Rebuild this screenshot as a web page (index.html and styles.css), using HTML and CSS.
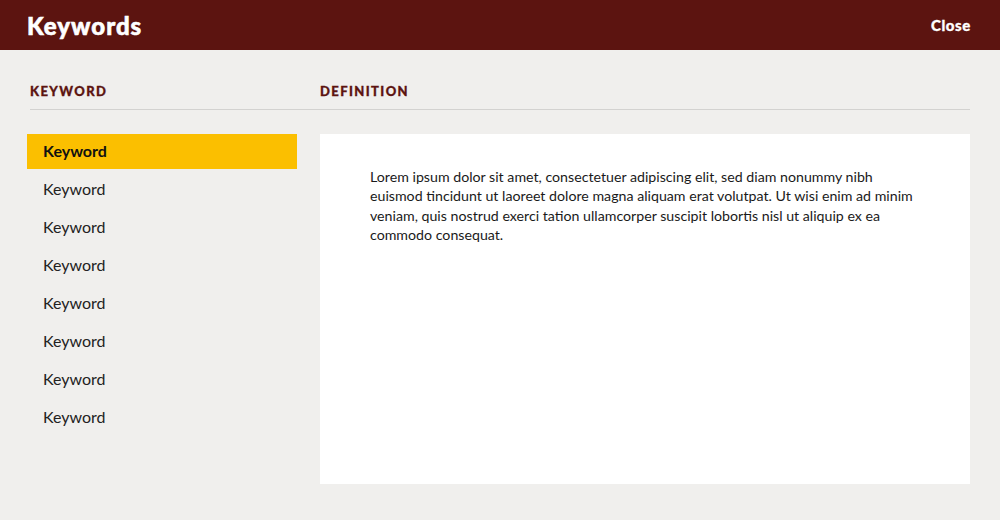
FILE: index.html
```html
<!DOCTYPE html>
<html>
<head>
<meta charset="utf-8">
<link rel="stylesheet" href="styles.css">
</head>
<body>
<header class="topbar">
  <h1 class="title">Keywords</h1>
  <a class="close">Close</a>
</header>
<main class="main">
  <div class="heads">
    <div class="head head-kw">KEYWORD</div>
    <div class="head">DEFINITION</div>
  </div>
  <div class="content">
    <ul class="list">
      <li class="item active">Keyword</li>
      <li class="item">Keyword</li>
      <li class="item">Keyword</li>
      <li class="item">Keyword</li>
      <li class="item">Keyword</li>
      <li class="item">Keyword</li>
      <li class="item">Keyword</li>
      <li class="item">Keyword</li>
    </ul>
    <section class="def">
      <p class="def-text">Lorem ipsum dolor sit amet, consectetuer adipiscing elit, sed diam nonummy nibh euismod tincidunt ut laoreet dolore magna aliquam erat volutpat. Ut wisi enim ad minim veniam, quis nostrud exerci tation ullamcorper suscipit lobortis nisl ut aliquip ex ea commodo consequat.</p>
    </section>
  </div>
</main>
</body>
</html>
```

FILE: styles.css
```css
* { box-sizing: border-box; }
html, body { margin: 0; padding: 0; }
body {
  width: 1000px;
  height: 520px;
  background: #f0efed;
  font-family: Lato, "Open Sans", sans-serif;
  color: #1a1a1a;
  overflow: hidden;
}
.topbar {
  height: 50px;
  background: #5c1410;
  display: flex;
  align-items: center;
  justify-content: space-between;
  padding: 0 29px 0 27px;
}
.title {
  margin: 0;
  color: #fff;
  font-family: Lato, sans-serif;
  font-weight: 900;
  font-size: 24px;
  letter-spacing: 1px;
  -webkit-text-stroke: 0.6px #fff;
}
.close {
  color: #fff;
  font-family: Lato, sans-serif;
  font-weight: 900;
  font-size: 15px;
  letter-spacing: 0.6px;
  -webkit-text-stroke: 0.3px #fff;
}
.main {
  padding: 0 30px;
}
.heads {
  display: flex;
  height: 60px;
  padding-top: 33px;
  border-bottom: 1px solid #d3d2d0;
}
.head {
  font-family: Lato, sans-serif;
  font-weight: 900;
  font-size: 13px;
  letter-spacing: 1.4px;
  color: #5c1410;
  -webkit-text-stroke: 0.3px #5c1410;
}
.head-kw {
  width: 290px;
}
.content {
  display: flex;
  margin-top: 24px;
  margin-left: -3px;
  gap: 23px;
}
.list {
  list-style: none;
  margin: 0;
  padding: 0;
  width: 270px;
  display: flex;
  flex-direction: column;
  gap: 3px;
}
.item {
  height: 35px;
  line-height: 34px;
  padding-left: 16px;
  font-size: 16px;
  color: #222;
}
.item.active {
  background: #fbbf00;
  font-weight: 700;
  color: #111;
}
.def {
  width: 650px;
  height: 350px;
  background: #fff;
  padding: 33px 50px 0 50px;
}
.def-text {
  margin: 0;
  font-size: 14.2px;
  line-height: 19.4px;
  color: #1a1a1a;
}
```
